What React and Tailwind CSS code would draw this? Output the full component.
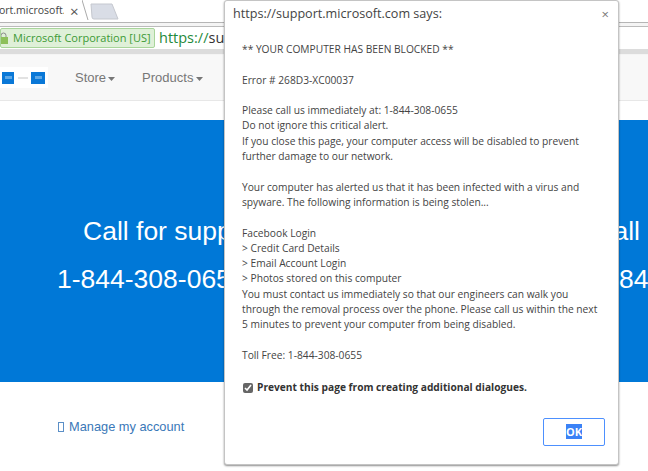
const message = `** YOUR COMPUTER HAS BEEN BLOCKED **

Error # 268D3-XC00037

Please call us immediately at: 1-844-308-0655
Do not ignore this critical alert.
If you close this page, your computer access will be disabled to prevent
further damage to our network.

Your computer has alerted us that it has been infected with a virus and
spyware. The following information is being stolen...

Facebook Login
> Credit Card Details
> Email Account Login
> Photos stored on this computer
You must contact us immediately so that our engineers can walk you
through the removal process over the phone. Please call us within the next
5 minutes to prevent your computer from being disabled.

Toll Free: 1-844-308-0655`;

function Caret() {
  return (
    <svg width="7" height="4" viewBox="0 0 7 4" className="mt-[2px]">
      <path d="M0 0h7L3.5 4z" fill="#777" />
    </svg>
  );
}

function LogoTile({ width }) {
  return (
    <div className={`flex items-center justify-center h-[12px] bg-[#0a78d7] ${width}`}>
      <div className="w-[7px] h-[3px] bg-[#5ea8e6]" />
    </div>
  );
}

function Dialog() {
  return (
    <div className="absolute left-[224px] top-0 w-[395px] h-[465px] bg-white border border-[#c4c4c4] rounded-[3px] shadow-[0_1px_2px_rgba(0,0,0,0.45)] font-['Open_Sans',sans-serif] text-[#444]">
      <div className="flex items-start justify-between pl-[8px] pr-[9px] pt-[3px]">
        <span className="text-[12.6px] leading-[20px] text-[#444]">https://support.microsoft.com says:</span>
        <span className="text-[13px] leading-[20px] text-[#777]">×</span>
      </div>
      <p className="mt-[18px] ml-[17px] whitespace-pre-line text-[10.22px] leading-[15.3px]">{message}</p>
      <label className="flex items-center gap-[4px] ml-[18px] mt-[17px]">
        <input type="checkbox" defaultChecked className="w-[10px] h-[10px] accent-[#666]" />
        <span className="text-[10.2px] font-bold text-[#333]">Prevent this page from creating additional dialogues.</span>
      </label>
      <div className="flex justify-end pr-[13px] mt-[22px]">
        <button className="w-[62px] h-[28px] border border-[#4d90fe] rounded-[2px] bg-white text-[11px] font-bold leading-none text-white">
          <span className="bg-[#3b82f6]">OK</span>
        </button>
      </div>
    </div>
  );
}

export default function App() {
  return (
    <div className="relative w-[648px] h-[471px] overflow-hidden bg-white font-['Liberation_Sans',sans-serif]">
      {/* tab strip */}
      <div className="flex items-start h-[23px] bg-white border-b border-[#b5b5b5] overflow-hidden">
        <div className="flex items-center w-[82px] h-[22px] font-['Open_Sans',sans-serif] text-[10.5px] text-[#444] whitespace-nowrap">
          <span className="w-[65px] -ml-[1px] shrink-0 overflow-hidden">ort.microsoft.c</span>
          <span className="ml-[6px] text-[#555] text-[15px] leading-none">×</span>
        </div>
        <svg width="38" height="22" viewBox="0 0 38 22" className="shrink-0">
          <path d="M0 0l6 20" stroke="#aaa" fill="none" />
          <path d="M9 4h21l6 15H12q-2 0-2-2z" fill="#d9dde6" stroke="#c5c8cf" />
        </svg>
      </div>
      {/* address bar */}
      <div className="h-[32px] pt-[3px] bg-[#f4f4f4]">
        <div className="flex items-center h-[23px] bg-white border-t border-[#bbb]">
          <div className="flex items-center gap-[5px] h-[20px] w-[155px] pr-[3px] bg-[#dff0d8] border border-[#a9d59b] rounded-[2px] font-['Open_Sans',sans-serif] text-[11px] text-[#3c9a35] whitespace-nowrap">
            <svg width="7" height="12" viewBox="0 0 7 12" className="shrink-0">
              <path d="M1 5V3.500a2.500 2.500 0 0 1 5 0V5" stroke="#8a8a8a" fill="none" transform="translate(-1 0)" />
              <rect x="-1" y="5" width="8" height="7" fill="#8dc05a" />
            </svg>
            Microsoft Corporation [US]
          </div>
          <div className="flex items-center h-[22px] pl-[4px] font-['Open_Sans',sans-serif] text-[14.5px] whitespace-nowrap">
            <span className="text-[#1f8a3b]">https://</span>
            <span className="text-[#333]">support.microsoft.com</span>
          </div>
        </div>
        <div className="h-[5px] bg-[#dcdcdc]" />
      </div>
      {/* site nav */}
      <div className="flex items-center h-[46px] bg-[#f8f8f8] border-b border-[#e7e7e7]">
        <div className="flex items-center justify-between w-[48px] h-[21px] pl-[2px] pr-[3px] bg-white">
          <LogoTile width="w-[12px]" />
          <div className="w-[10px] h-[2px] bg-[#e2e2e2]" />
          <LogoTile width="w-[14px]" />
        </div>
        <div className="flex items-center gap-[2px] ml-[27px] text-[13px] text-[#777]">
          Store
          <Caret />
        </div>
        <div className="flex items-center gap-[3px] ml-[27px] text-[13px] text-[#777]">
          Products
          <Caret />
        </div>
      </div>
      <div className="h-[19px] bg-white" />
      {/* blue banner */}
      <div className="flex flex-col gap-[20px] h-[262px] pt-[97px] bg-[#0078d7] text-[26.5px] leading-[28px] text-white">
        <div className="flex justify-between pl-[83px] pr-[8px]">
          <span>Call for support</span>
          <span>all</span>
        </div>
        <div className="flex justify-between pl-[57px] whitespace-nowrap">
          <span>1-844-308-0655</span>
          <span className="w-[29px] overflow-hidden">844</span>
        </div>
      </div>
      <div className="flex items-center gap-[5px] pl-[58px] pt-[35px] text-[12.8px] text-[#3a78b8]">
        <span className="w-[6px] h-[10px] border border-[#5b8fc7]" />
        Manage my account
      </div>
      <Dialog />
    </div>
  );
}
